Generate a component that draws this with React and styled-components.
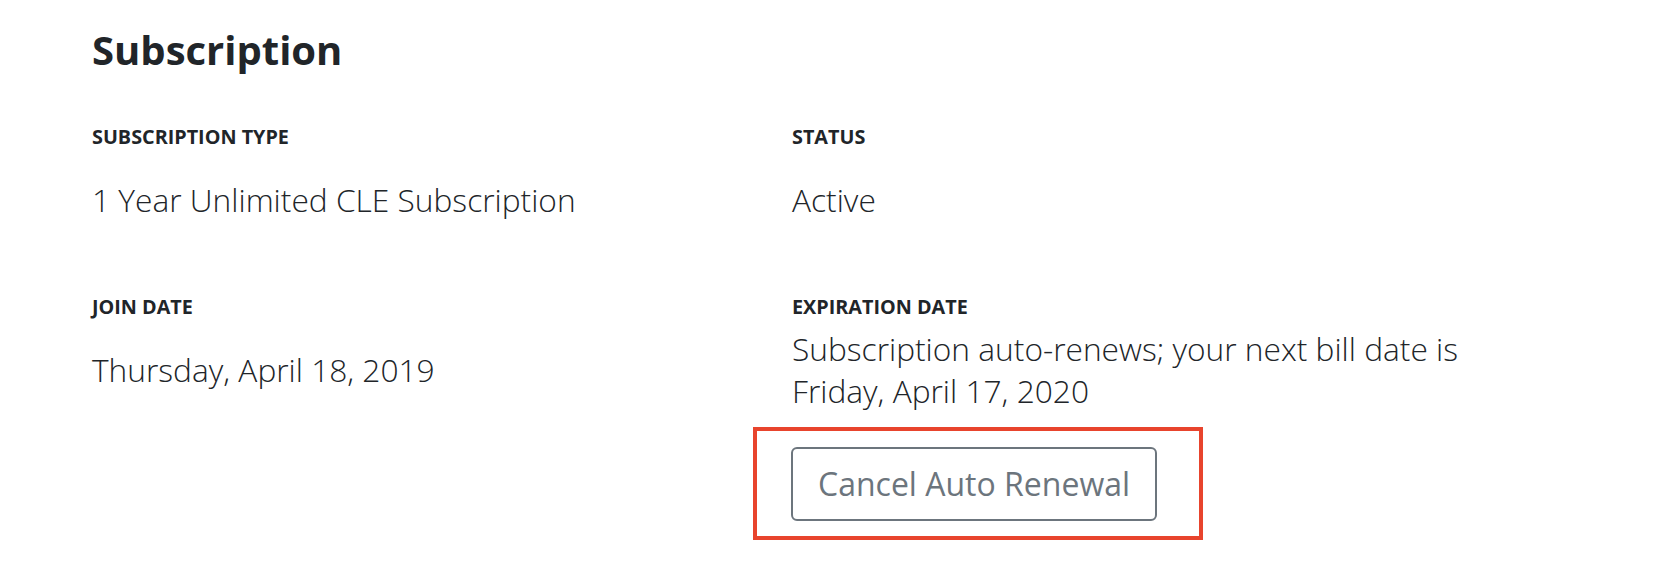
import React from "react";
import styled, { createGlobalStyle } from "styled-components";

const GlobalStyle = createGlobalStyle`
  body {
    margin: 0;
    background: #ffffff;
    font-family: "Open Sans", "Noto Sans", sans-serif;
    color: #212529;
  }
`;

const subscription = {
  type: "1 Year Unlimited CLE Subscription",
  status: "Active",
  joinDate: "Thursday, April 18, 2019",
  nextBill: "Friday, April 17, 2020",
};

const App = () => {
  return (
    <>
      <GlobalStyle />
      <Page>
        <Title>Subscription</Title>
        <FieldGrid>
          <Field>
            <Label>Subscription Type</Label>
            <Value>{subscription.type}</Value>
          </Field>
          <Field>
            <Label>Status</Label>
            <Value>{subscription.status}</Value>
          </Field>
          <Field>
            <Label>Join Date</Label>
            <Value>{subscription.joinDate}</Value>
          </Field>
          <Field>
            <Label>Expiration Date</Label>
            <Value tight>
              Subscription auto-renews; your next bill date is{" "}
              {subscription.nextBill}
            </Value>
            <Highlight>
              <OutlineButton type="button">Cancel Auto Renewal</OutlineButton>
            </Highlight>
          </Field>
        </FieldGrid>
      </Page>
    </>
  );
};

export default App;

const Page = styled.div`
  padding: 26px 0 0 92px;
`;

const Title = styled.h2`
  margin: 0 0 51px;
  font-size: 40px;
  line-height: 48px;
  font-weight: 700;
  color: #212529;
`;

const FieldGrid = styled.div`
  display: grid;
  grid-template-columns: 700px 700px;
  row-gap: 74px;
`;

const Field = styled.div`
  display: flex;
  flex-direction: column;
  align-items: flex-start;
`;

const Label = styled.div`
  font-size: 19.8px;
  line-height: 24px;
  font-weight: 700;
  text-transform: uppercase;
  color: #212529;
`;

const Value = styled.div`
  margin-top: ${(props) => (props.tight ? "9px" : "30px")};
  font-size: 31.7px;
  line-height: 42px;
  font-weight: 300;
  color: #212529;
`;

const Highlight = styled.div`
  margin: 15px 0 0 -39px;
  padding: 16px 42px 15px 34px;
  border: 4px solid #e8442d;
`;

const OutlineButton = styled.button`
  display: block;
  padding: 13px 25px;
  font-family: "Open Sans", "Noto Sans", sans-serif;
  font-size: 32px;
  line-height: 44px;
  font-weight: 400;
  color: #6c757d;
  background: #ffffff;
  border: 2px solid #6c757d;
  border-radius: 6px;
  cursor: pointer;
`;
